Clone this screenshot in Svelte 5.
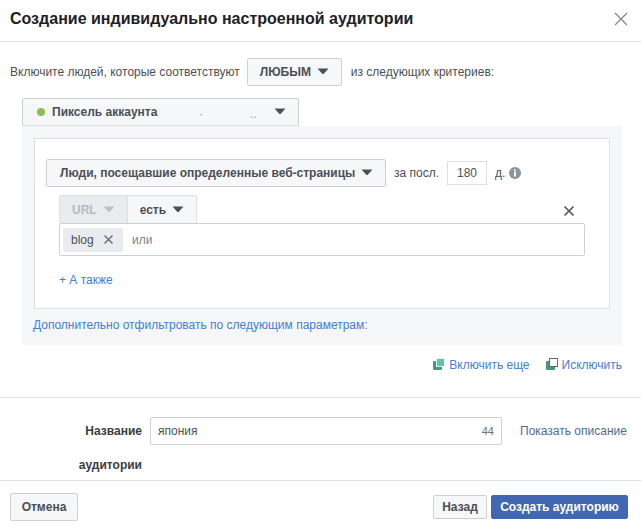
<script>
	const crit = 'из следующих критериев:';
</script>

{#snippet caret(muted = false)}
	<svg class="caret" class:muted width="12" height="7" viewBox="0 0 12 7"><path d="M0.5 0.5h11L7 5.6q-1 1-2 0z" fill="currentColor" /></svg>
{/snippet}

{#snippet stack(front, edge)}
	<svg class="stack" width="12" height="12" viewBox="0 0 12 12">
		<rect x="0" y="3" width="9" height="9" rx="1" fill="#4a9488" />
		<rect x="3.5" y="0.5" width="8" height="8" fill={front} stroke={edge} />
	</svg>
{/snippet}

<div class="dialog">
	<header class="head">
		<h1>Создание индивидуально настроенной аудитории</h1>
		<svg class="close" width="14" height="14" viewBox="0 0 14 14"><path d="M1 1l12 12M13 1L1 13" stroke="#7f8389" stroke-width="1.2" /></svg>
	</header>

	<div class="body">
		<div class="match">
			<span>Включите людей, которые соответствуют</span>
			<button class="btn any">ЛЮБЫМ {@render caret()}</button>
			<span>{crit}</span>
		</div>

		<div class="rule">
			<button class="btn pixel">
				<i class="dot"></i>
				<span class="pixel-name">Пиксель аккаунта</span>
				<span class="redacted first">·</span>
				<span class="redacted second">..</span>
				{@render caret()}
			</button>
			<div class="panel">
				<div class="card">
					<div class="visit">
						<button class="btn people">Люди, посещавшие определенные веб-страницы {@render caret()}</button>
						<span class="for">за посл.</span>
						<span class="days">180</span>
						<span class="for">д.</span>
						<svg class="info" width="12" height="12" viewBox="0 0 12 12">
							<circle cx="6" cy="6" r="6" fill="#8d949e" />
							<rect x="5" y="5" width="2" height="4.5" fill="#fff" />
							<rect x="5" y="2.5" width="2" height="1.7" fill="#fff" />
						</svg>
					</div>

					<div class="cond">
						<div class="cond-top">
							<div class="seg">
								<span class="seg-url">URL {@render caret(true)}</span>
								<span class="seg-is">есть {@render caret()}</span>
							</div>
							<svg class="cond-x" width="10" height="10" viewBox="0 0 10 10"><path d="M0.5 0.5l9 9M9.5 0.5l-9 9" stroke="#5b6068" stroke-width="1.6" /></svg>
						</div>
						<div class="tags">
							<span class="tag">blog
								<svg width="9" height="9" viewBox="0 0 9 9"><path d="M0.5 0.5l8 8M8.5 0.5l-8 8" stroke="#6d7278" stroke-width="1.5" /></svg>
							</span>
							<span class="or">или</span>
						</div>
						<a class="also" href="#also">+ А также</a>
					</div>
				</div>
				<a class="more" href="#more">Дополнительно отфильтровать по следующим параметрам:</a>
			</div>
		</div>

		<div class="actions">
			<a href="#include">{@render stack('#66c2ac', '#e4f4ef')}Включить еще</a>
			<a href="#exclude">{@render stack('#fff', '#5d6b6b')}Исключить</a>
		</div>
	</div>

	<div class="name-row">
		<label for="aud-name">Название аудитории</label>
		<div class="name-input">
			<input id="aud-name" value="япония" />
			<span>44</span>
		</div>
		<a href="#desc">Показать описание</a>
	</div>

	<footer class="foot">
		<button class="btn cancel">Отмена</button>
		<div class="foot-right">
			<button class="btn back">Назад</button>
			<button class="btn create">Создать аудиторию</button>
		</div>
	</footer>
</div>

<style>
	:global(body) {
		margin: 0;
		background: #fff;
	}

	.dialog {
		width: 641px;
		height: 530px;
		overflow: hidden;
		display: flex;
		flex-direction: column;
		font-family: 'Liberation Sans', Arial, sans-serif;
		font-size: 12px;
		color: #4b4f56;
	}

	a {
		color: #4080d8;
		text-decoration: none;
	}

	.head {
		height: 41px;
		flex: none;
		box-sizing: border-box;
		display: flex;
		align-items: center;
		justify-content: space-between;
		padding: 0 13px 3px 10px;
	}

	.head h1 {
		margin: 0;
		font-size: 16px;
		font-weight: bold;
		color: #1d2129;
	}

	.body {
		border-top: 1px solid #dddfe2;
		border-bottom: 1px solid #dddfe2;
		height: 357px;
		flex: none;
		box-sizing: border-box;
		padding: 16px 19px 0 10px;
	}

	.btn {
		box-sizing: border-box;
		display: inline-flex;
		align-items: center;
		height: 28px;
		padding: 0 12px 1px;
		font: bold 12px 'Liberation Sans', Arial, sans-serif;
		color: #4b4f56;
		background: #f6f7f9;
		border: 1px solid #ced0d4;
		border-radius: 2px;
	}

	.caret {
		color: #4b4f56;
		margin-left: 6px;
		flex: none;
	}

	.caret.muted {
		color: #bcc0c6;
	}

	.match {
		display: flex;
		align-items: center;
		height: 28px;
	}

	.any {
		margin: 0 9px 0 7px;
		width: 95px;
	}

	.rule {
		margin: 12px 0 0 12px;
	}

	.pixel {
		position: relative;
		width: 277px;
		padding: 0 12px 1px 14px;
		border-bottom-left-radius: 0;
		border-bottom-right-radius: 0;
		display: flex;
		border-bottom-color: #dddfe2;
	}

	.dot {
		width: 8px;
		height: 8px;
		border-radius: 50%;
		background: #8cc04f;
		margin-right: 7px;
	}

	.pixel-name {
		flex: 1;
		text-align: left;
	}

	/* blurred-out account id, only a few specks of it show */
	.redacted {
		position: absolute;
		top: 8px;
		font-weight: normal;
		color: #9a9ea4;
	}

	.redacted.first {
		left: 176px;
	}

	.redacted.second {
		left: 227px;
	}

	.panel {
		background: #f5f6f8;
		padding: 12px 12px 0;
		height: 219px;
		box-sizing: border-box;
	}

	.card {
		box-sizing: border-box;
		height: 171px;
		background: #fff;
		border: 1px solid #dddfe2;
		padding: 20px 24px 0 11px;
	}

	.visit {
		display: flex;
		align-items: center;
	}

	.people {
		width: 340px;
		flex: none;
		padding-left: 13px;
		white-space: nowrap;
		justify-content: space-between;
	}

	.for {
		margin-left: 8px;
	}

	.days {
		box-sizing: border-box;
		width: 40px;
		height: 24px;
		margin-left: 8px;
		border: 1px solid #dddfe2;
		display: flex;
		align-items: center;
		justify-content: center;
		color: #4b4f56;
	}

	.info {
		margin-left: 4px;
	}

	.cond {
		margin: 8px 0 0 13px;
	}

	.cond-top {
		display: flex;
		justify-content: space-between;
		align-items: center;
	}

	.seg {
		display: flex;
		height: 28px;
		font-weight: bold;
		border: 1px solid #dddfe2;
		border-bottom: 0;
		border-radius: 2px 2px 0 0;
		box-sizing: border-box;
		background: #f6f7f9;
	}

	.seg-url,
	.seg-is {
		display: flex;
		align-items: center;
		padding: 0 12px;
	}

	.seg-url {
		color: #b6bac0;
		background: #e9ebee;
		border-right: 1px solid #dddfe2;
	}

	.cond-x {
		margin: 4px 11px 0 0;
	}

	.tags {
		box-sizing: border-box;
		height: 33px;
		border: 1px solid #ced0d4;
		border-radius: 2px;
		display: flex;
		align-items: center;
		padding-left: 3px;
	}

	.tag {
		display: flex;
		align-items: center;
		justify-content: space-between;
		box-sizing: border-box;
		width: 60px;
		height: 24px;
		padding: 0 10px 0 8px;
		background: #e9ebee;
		border-radius: 2px;
	}

	.or {
		margin-left: 9px;
		color: #80858c;
	}

	.also {
		display: block;
		margin-top: 17px;
	}

	.more {
		display: block;
		margin-top: 9px;
		margin-left: -1px;
	}

	.actions {
		display: flex;
		justify-content: flex-end;
		gap: 16px;
		margin-top: 13px;
	}

	.actions a {
		display: flex;
		align-items: center;
		gap: 4px;
	}

	.stack {
		margin-top: -3px;
	}

	.name-row {
		height: 83px;
		flex: none;
		box-sizing: border-box;
		display: flex;
		align-items: flex-start;
		padding: 19px 13px 0 0;
		border-bottom: 1px solid #dddfe2;
	}

	.name-row label {
		width: 70px;
		margin: -3px 0 0 72px;
		flex: none;
		text-align: right;
		font-weight: bold;
		line-height: 34px;
		color: #3a3d42;
	}

	.name-input {
		box-sizing: border-box;
		width: 352px;
		height: 28px;
		margin-left: 8px;
		border: 1px solid #ced0d4;
		border-radius: 2px;
		display: flex;
		align-items: center;
		justify-content: space-between;
		padding: 0 7px;
	}

	.name-input input {
		border: 0;
		outline: 0;
		padding: 0;
		font: inherit;
		color: #4b4f56;
		width: 200px;
	}

	.name-input span {
		font-size: 11px;
		color: #6d7278;
	}

	.name-row a {
		margin: 7px 0 0 18px;
		color: #4f6aa0;
		white-space: nowrap;
	}

	.foot {
		flex: 1;
		display: flex;
		align-items: flex-start;
		justify-content: space-between;
		padding: 12px 13px 0 10px;
	}

	.cancel {
		width: 68px;
		justify-content: center;
		padding: 0 0 1px;
	}

	.foot-right {
		display: flex;
		gap: 4px;
		margin-top: 2px;
	}

	.back {
		width: 54px;
		height: 24px;
		justify-content: center;
		padding: 0 0 1px;
	}

	.create {
		width: 137px;
		height: 24px;
		justify-content: center;
		padding: 0 0 1px;
		color: #fff;
		background: #4267b2;
		border-color: #4267b2;
	}
</style>
